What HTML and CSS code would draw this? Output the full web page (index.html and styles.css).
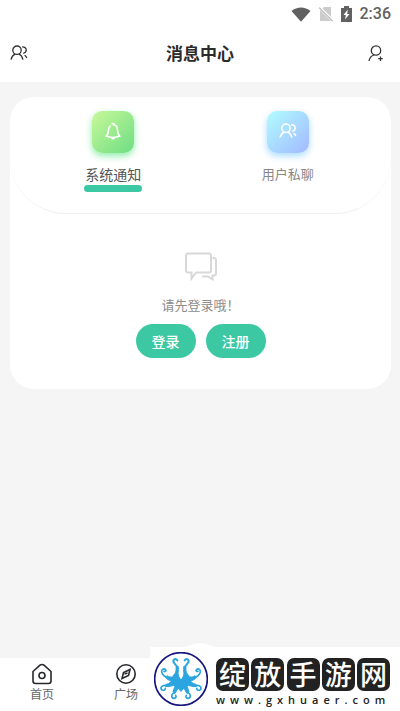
FILE: index.html
```html
<!DOCTYPE html>
<html lang="zh-CN">
<head>
<meta charset="utf-8">
<meta name="viewport" content="width=device-width, initial-scale=1">
<title>消息中心</title>
<link rel="stylesheet" href="styles.css">
</head>
<body>
<svg class="defs" aria-hidden="true">
  <symbol id="users" viewBox="0 0 18 16">
    <circle cx="7" cy="5.2" r="4.2"/>
    <path d="M1 14.6C1.6 11.8 3.3 10 5 9.2M9 9.2c2 .9 3.4 2.800 3.900 5.400M12.200 1.800c2.600.1 4 1.700 4 3.300 0 1.500-1 2.800-2.900 3.300M14.600 10.200c1.200.7 1.800 1.600 2.200 2.800"/>
  </symbol>
</svg>
<header class="top">
  <div class="status">
    <svg width="20" height="15" viewBox="0 0 20 15"><path d="M.5 4C6-.7 14-.7 19.500 4L10 14.800z" fill="#616161"/></svg>
    <svg width="14" height="16" viewBox="0 0 14 16"><path d="M5 1h7v14H1V5z" fill="#ccc"/><path d="M0 1l14 14" stroke="#fff" stroke-width="3"/><path d="M0 1.500l13.500 13.500" stroke="#bdbdbd" stroke-width="1.300"/></svg>
    <svg width="11" height="16" viewBox="0 0 11 16"><path d="M3 0h5v2h3v14H0V2h3z" fill="#616161"/><path d="M6.800 3.500L2.500 9h2.300l-.7 4.500L8.500 8H6.200z" fill="#fff"/></svg>
    <span class="clock">2:36</span>
  </div>
  <div class="bar">
    <button class="icon-button" aria-label="好友"><svg class="line" width="18" height="16"><use href="#users"/></svg></button>
    <h1>消息中心</h1>
    <button class="icon-button" aria-label="添加好友"><svg class="line" width="22" height="17" viewBox="0 0 22 17"><circle cx="8" cy="5.500" r="4.700"/><path d="M1 16c.5-3 2.300-5.200 5-6M12.500 11.500v4.400M10.300 13.700h4.400"/></svg></button>
  </div>
</header>
<main class="card">
  <nav class="tabs">
    <button class="tab active">
      <span class="tile green"><svg width="16" height="18" viewBox="0 0 16 18"><path d="M5.600 3.600C4.200 4.500 3.600 6 3.500 8 3.400 11 3 12.600 1.300 14c1.800 1 4 1.400 6.700 1.400s4.900-.4 6.700-1.400c-1.700-1.400-2.100-3-2.200-6C12.400 5 11 2.800 8 2.800"/><path d="M6.500 2.200q1.500-1.600 3 0M6.200 16l1.800 1 1.800-1"/></svg></span>
      <span class="label">系统通知</span>
    </button>
    <button class="tab">
      <span class="tile blue"><svg width="18" height="16"><use href="#users"/></svg></span>
      <span class="label">用户私聊</span>
    </button>
  </nav>
  <section class="empty">
    <svg width="32" height="30" viewBox="0 0 32 30"><path d="M3 1.500h21q2 0 2 2v15q0 2-2 2H11L6.500 26.500V20.500H3q-2 0-2-2v-15q0-2 2-2z"/><path d="M27.500 6H29q2 0 2 2v13.500q0 2-2 2h-1.500v4L23 24.500h-6"/></svg>
    <p>请先登录哦！</p>
    <div class="actions"><button>登录</button><button>注册</button></div>
  </section>
</main>
<nav class="bottom">
  <a href="#home"><svg width="22" height="22" viewBox="0 0 22 22"><path d="M2 8.500L9 2.200q2-1.500 4 0l7 6.300V18q0 2.500-2.500 2.500h-13Q2 20.500 2 18z"/><circle cx="11" cy="12.500" r="3"/></svg><span>首页</span></a>
  <a href="#square"><svg width="22" height="22" viewBox="0 0 22 22"><circle cx="11" cy="11" r="9.200"/><path d="M15 6.500l-1.500 6L7 15.500l1.500-6z"/><path d="M9.500 11l3-1"/></svg><span>广场</span></a>
</nav>
<span class="bump"></span>
<aside class="brand">
  <svg width="54" height="54" viewBox="0 0 162 162">
    <circle cx="81" cy="81" r="79" fill="#fff" stroke="#151580" stroke-width="5"/>
    <g id="arms" fill="#2ba5df" stroke="#2ba5df" stroke-linecap="round" stroke-linejoin="round">
      <path d="M76 88C60 86 54 78 58 70 67 62 66 56 66 46L72 42C76 58 68 66 76 76z" stroke-width="3"/>
      <path d="M69 46C66 34 54 33 59 24q6-6 11 1" fill="none" stroke-width="6"/>
      <path d="M62 96C48 82 42 87 35 76L39 71C49 79 54 70 66 80z" stroke-width="3"/>
      <path d="M38 76C27 71 20 62 24 54q7-7 12 1-1 5-6 3" fill="none" stroke-width="5"/>
      <path d="M68 100C53 98 48 107 34 103L36 97C48 97 50 84 62 86z" stroke-width="3"/>
      <path d="M36 100C21 99 18 109 24 114q9 3 10-5" fill="none" stroke-width="5"/>
      <path d="M78 106C68 108 69 119 62 125L57 120C61 111 60 102 68 96z" stroke-width="3"/>
      <path d="M60 121C50 128 52 138 60 139q9-2 5-9" fill="none" stroke-width="5"/>
    </g>
    <use href="#arms" transform="matrix(-1 0 0 1 162 0)"/>
    <path d="M81 82C72 70 56 71 55 86c0 10 12 17 26 34 14-17 26-24 26-34-1-15-17-16-26-4z" fill="#2ba5df"/>
  </svg>
  <div class="brand-text">
    <div class="seals"><span>绽</span><span>放</span><span>手</span><span>游</span><span>网</span></div>
    <div class="domain">www.gxhuaer.com</div>
  </div>
</aside>
</body>
</html>
```

FILE: styles.css
```css
* { box-sizing: border-box; }
body {
  margin: 0;
  min-height: 100vh;
  display: flex;
  flex-direction: column;
  background: #f5f5f5;
  color: #333;
  font-family: "Noto Sans CJK SC", sans-serif;
}
button { border: 0; padding: 0; background: none; font: inherit; color: inherit; }
svg { display: block; flex: none; }
.defs { position: absolute; width: 0; height: 0; }
.top { background: #fff; }
.status {
  height: 28px;
  padding: 0 9px;
  display: flex;
  justify-content: flex-end;
  align-items: center;
  gap: 8px;
}
.clock { color: #616161; font: 500 16px/28px Roboto, sans-serif; }
.bar {
  height: 54px;
  padding: 0 10px 4px;
  display: grid;
  grid-template-columns: 1fr auto 1fr;
  align-items: center;
}
.icon-button { justify-self: start; }
.icon-button:last-child { justify-self: end; }
h1 { margin: 0; font-size: 17px; line-height: 24px; font-weight: 700; color: #2b2b2b; }
.line { fill: none; stroke: #333; stroke-width: 1.3; }
.card {
  margin: 15px 9px 0 10px;
  padding-bottom: 31px;
  background: #fff;
  border-radius: 24px;
}
.tabs {
  display: grid;
  grid-template-columns: 1fr 1fr;
  height: 117px;
  padding: 14px 16px 0;
  border-bottom: 1px solid #efefef;
  border-radius: 24px 24px 56px 56px;
}
.tab { display: flex; flex-direction: column; align-items: center; }
.tile {
  width: 42px;
  height: 42px;
  border-radius: 10px;
  display: grid;
  place-items: center;
}
.tile svg { fill: none; stroke: #fff; stroke-width: 1.5; margin-bottom: 2px; }
.green { background: linear-gradient(135deg, #c8f99a, #6edd83); box-shadow: 0 3px 7px #8eeeaa; }
.blue { background: linear-gradient(135deg, #b0fcff, #a3b9ff); box-shadow: 0 3px 7px #a9dcff; }
.label { margin: 11px 0 1px; font-size: 13px; line-height: 20px; color: #888; }
.active .label { font-size: 14px; color: #555; }
.active::after { content: ""; width: 58px; height: 7px; border-radius: 4px; background: #3dc8a4; }
.empty { display: flex; flex-direction: column; align-items: center; padding-top: 38px; }
.empty svg { fill: none; stroke: #d8d8d8; stroke-width: 2; }
.empty p { margin: 13px 0 9px; font-size: 13px; line-height: 20px; color: #8c8c8c; }
.actions { display: flex; gap: 10px; }
.actions button {
  width: 60px;
  height: 34px;
  border-radius: 17px;
  background: #3dc8a4;
  color: #fff;
  font-size: 14px;
  font-weight: 500;
}
.bottom {
  margin-top: auto;
  height: 53px;
  padding-top: 5px;
  background: #fff;
  display: grid;
  grid-template-columns: 21% 21%;
}
.bottom a {
  display: flex;
  flex-direction: column;
  align-items: center;
  color: #666;
  font-size: 12px;
  line-height: 18px;
  text-decoration: none;
}
.bottom svg { fill: none; stroke: #26282c; stroke-width: 1.6; }
.bump {
  position: fixed;
  left: 50%;
  bottom: 16px;
  width: 52px;
  height: 52px;
  margin-left: -26px;
  border-radius: 50%;
  background: #fff;
}
.brand {
  position: fixed;
  right: 0;
  bottom: 0;
  height: 64px;
  width: 250px;
  padding: 5px 10px 0 4px;
  display: flex;
  gap: 8px;
  background: #fff;
}
.brand-text { flex: 1; min-width: 0; padding-top: 6px; }
.seals { display: flex; justify-content: space-between; }
.seals span {
  width: 33px;
  height: 33px;
  border-radius: 7px;
  background: #222;
  color: #fff;
  font-size: 27px;
  line-height: 31px;
  font-weight: 500;
  text-align: center;
}
.domain { font: 600 11px/18px "Open Sans", sans-serif; letter-spacing: 5px; color: #222; white-space: nowrap; }
```
